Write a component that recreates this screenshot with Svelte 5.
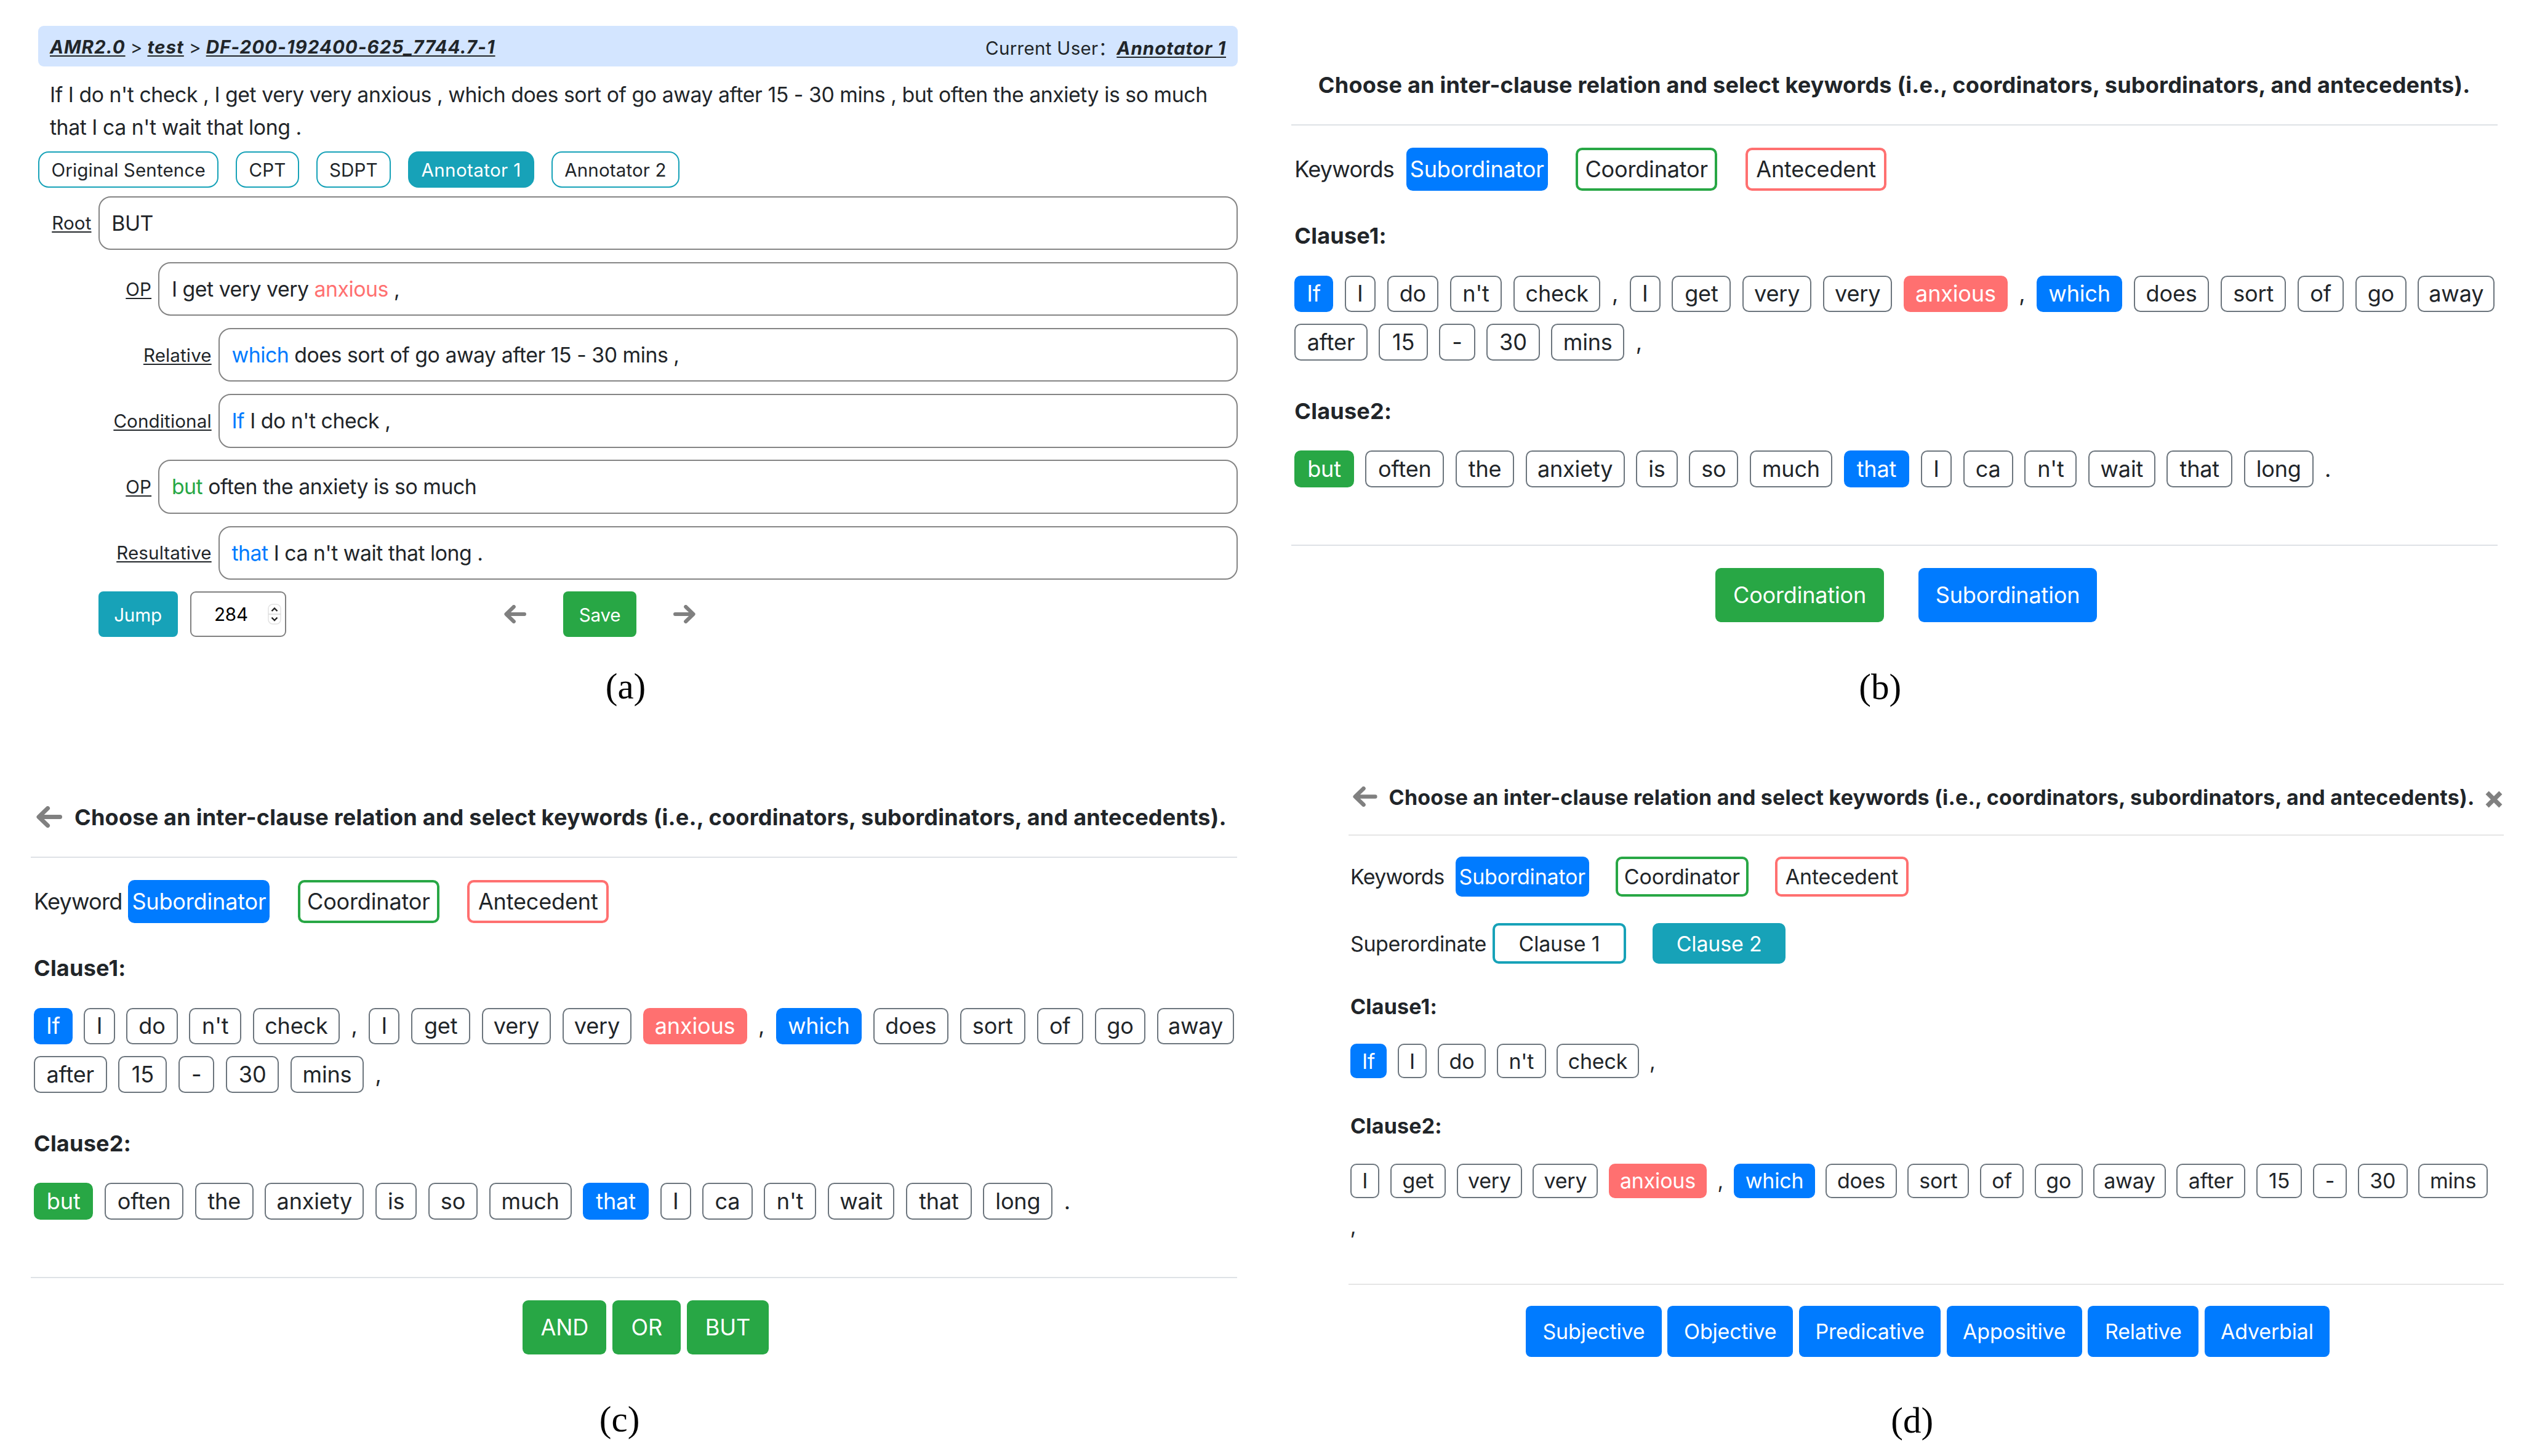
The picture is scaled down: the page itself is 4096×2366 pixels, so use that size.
<script lang="ts">
	type Kind = 'sub' | 'coord' | 'ante' | 'clause' | 'plain' | '';
	type Token = [text: string, kind?: Kind];
	type Option = { text: string; w: number; kind: Kind };
	type Dialog = {
		id: string;
		back?: boolean;
		close?: boolean;
		label: string;
		labelWidth: number;
		superordinate?: boolean;
		clauses: Token[][];
		options: Option[];
	};

	const question =
		'Choose an inter-clause relation and select keywords (i.e., coordinators, subordinators, and antecedents).';

	// token box widths, in panel units
	const widths: Record<string, number> = {
		If: 27.5, I: 22, do: 36.5, "n't": 37.1, check: 61.9, get: 42, very: 49.2,
		anxious: 73.9, which: 61, does: 53.6, sort: 46.5, of: 33, go: 36.3, away: 54.6,
		after: 51.9, '15': 34.7, '-': 25.5, '30': 37.8, mins: 52.1,
		but: 42.2, often: 56.1, the: 41.6, anxiety: 70.4, is: 29.5, so: 35.1, much: 58.6,
		that: 46.7, ca: 35.5, wait: 47.7, long: 49.4, ',': 4.3, '.': 4.3
	};

	const condition: Token[] = [['If', 'sub'], ['I'], ['do'], ["n't"], ['check'], [',', 'plain']];
	const matrix: Token[] = [
		['I'], ['get'], ['very'], ['very'], ['anxious', 'ante'], [',', 'plain'], ['which', 'sub'],
		['does'], ['sort'], ['of'], ['go'], ['away'], ['after'], ['15'], ['-'], ['30'], ['mins'], [',', 'plain']
	];
	const contrast: Token[] = [
		['but', 'coord'], ['often'], ['the'], ['anxiety'], ['is'], ['so'], ['much'], ['that', 'sub'],
		['I'], ['ca'], ["n't"], ['wait'], ['that'], ['long'], ['.', 'plain']
	];

	const dialogs: Dialog[] = [
		{
			id: 'b',
			label: 'Keywords',
			labelWidth: 79.5,
			clauses: [[...condition, ...matrix], contrast],
			options: [
				{ text: 'Coordination', w: 119.8, kind: 'coord' },
				{ text: 'Subordination', w: 127.1, kind: 'sub' }
			]
		},
		{
			id: 'c',
			back: true,
			label: 'Keyword',
			labelWidth: 67.2,
			clauses: [[...condition, ...matrix], contrast],
			options: [
				{ text: 'AND', w: 59.5, kind: 'coord' },
				{ text: 'OR', w: 48.5, kind: 'coord' },
				{ text: 'BUT', w: 58, kind: 'coord' }
			]
		},
		{
			id: 'd',
			back: true,
			close: true,
			label: 'Keywords',
			labelWidth: 79.4,
			superordinate: true,
			clauses: [condition, matrix],
			options: [
				{ text: 'Subjective', w: 102.3, kind: 'sub' },
				{ text: 'Objective', w: 94.9, kind: 'sub' },
				{ text: 'Predicative', w: 107, kind: 'sub' },
				{ text: 'Appositive', w: 102.3, kind: 'sub' },
				{ text: 'Relative', w: 83.5, kind: 'sub' },
				{ text: 'Adverbial', w: 94.5, kind: 'sub' }
			]
		}
	];

	const tabs = ['Original Sentence', 'CPT', 'SDPT', 'Annotator 1', 'Annotator 2'];
	let activeTab = $state('Annotator 1');
	let index = $state(284);

	// kw is the highlighted keyword between pre and post
	const tree: { label: string; level: number; pre?: string; kw?: string; kind?: Kind; post?: string }[] = [
		{ label: 'Root', level: 0, pre: 'BUT' },
		{ label: 'OP', level: 1, pre: 'I get very very ', kw: 'anxious', kind: 'ante', post: ' ,' },
		{ label: 'Relative', level: 2, kw: 'which', kind: 'sub', post: ' does sort of go away after 15 - 30 mins ,' },
		{ label: 'Conditional', level: 2, kw: 'If', kind: 'sub', post: " I do n't check ," },
		{ label: 'OP', level: 1, kw: 'but', kind: 'coord', post: ' often the anxiety is so much' },
		{ label: 'Resultative', level: 2, kw: 'that', kind: 'sub', post: " I ca n't wait that long ." }
	];

	const size = (n: number) => `calc(var(--u) * ${n})`;
</script>

{#snippet arrow(dir: 'left' | 'right')}
	<svg class="arrow {dir}" viewBox="0 0 42 35" aria-hidden="true">
		<path d="M18.5 3.5 4 17.5 18.5 31.5M4.5 17.5H38.5" />
	</svg>
{/snippet}

<main>
	<figure class="panel a">
		<header class="crumbs">
			<span class="path"><b>AMR2.0</b> &gt; <b>test</b> &gt; <b>DF-200-192400-625_7744.7-1</b></span>
			<span class="user">Current User：<b>Annotator 1</b></span>
		</header>
		<p class="sentence">
			If I do n't check , I get very very anxious , which does sort of go away after 15 - 30 mins , but often the anxiety is so much<br />
			that I ca n't wait that long .
		</p>
		<nav class="tabs">
			{#each tabs as tab}
				<button class="tab" class:active={tab === activeTab} onclick={() => (activeTab = tab)}>{tab}</button>
			{/each}
		</nav>
		<div class="tree">
			{#each tree as node}
				<div class="node">
					<span class="rel" style:width="{86.5 + node.level * 97.6}px"><u>{node.label}</u></span>
					<div class="box">{node.pre ?? ''}<span class="kw {node.kind ?? ''}">{node.kw ?? ''}</span>{node.post ?? ''}</div>
				</div>
			{/each}
		</div>
		<div class="toolbar">
			<button class="jump">Jump</button>
			<div class="number">
				<span>{index}</span>
				<svg viewBox="0 0 22 34" aria-hidden="true">
					<rect x="1" y="1" width="20" height="32" rx="7" />
					<path class="split" d="M1 17H21" />
					<path d="M6.5 12 11 7.5 15.5 12M6.5 22.5 11 27 15.5 22.5" />
				</svg>
			</div>
			{@render arrow('left')}
			<button class="save">Save</button>
			{@render arrow('right')}
		</div>
		<figcaption>(a)</figcaption>
	</figure>

	{#each dialogs as d}
		<figure class="panel dialog {d.id}">
			<header class="head">
				{#if d.back}{@render arrow('left')}{/if}
				<h1>{question}</h1>
				{#if d.close}
					<svg class="close" viewBox="0 0 27 27" aria-hidden="true"><path d="M3 3 24 24M24 3 3 24" /></svg>
				{/if}
			</header>
			<div class="body">
				<div class="row">
					<span class="label" style:width={size(d.labelWidth)}>{d.label}</span>
					<button class="key sub">Subordinator</button>
					<button class="key outline coord">Coordinator</button>
					<button class="key outline ante">Antecedent</button>
				</div>
				{#if d.superordinate}
					<div class="row second">
						<span class="label" style:width={size(107.4)}>Superordinate</span>
						<button class="key outline clause">Clause 1</button>
						<button class="key clause">Clause 2</button>
					</div>
				{/if}
				{#each d.clauses as tokens, i}
					<h2>Clause{i + 1}:</h2>
					<div class="tokens">
						{#each tokens as [text, kind]}
							<span class="token {kind ?? ''}" style:width={size(widths[text])}>{text}</span>
						{/each}
					</div>
				{/each}
			</div>
			<footer>
				{#each d.options as o}
					<button class="option {o.kind}" style:width={size(o.w)}>{o.text}</button>
				{/each}
			</footer>
			<figcaption>({d.id})</figcaption>
		</figure>
	{/each}
</main>

<style>
	:global(body) {
		background: #fff;
	}
	main {
		display: grid;
		grid-template-columns: 2048px 2048px;
		grid-template-rows: 1190px 1176px;
		width: 4096px;
		height: 2366px;
		overflow: hidden;
		background: #fff;
		color: #212529;
		font-family: Inter, 'Noto Sans CJK SC', sans-serif;
		letter-spacing: -0.012em;
	}
	.panel {
		box-sizing: border-box;
		margin: 0;
	}
	button {
		box-sizing: border-box;
		margin: 0;
		padding: 0;
		border: 0;
		font: inherit;
		letter-spacing: inherit;
		color: #fff;
		white-space: nowrap;
	}
	figcaption {
		font-family: 'Palatino Linotype', Palatino, 'Liberation Serif', serif;
		font-size: 59px;
		line-height: 60px;
		letter-spacing: 0;
		text-align: center;
		color: #000;
	}

	/* keyword colours */
	.sub {
		--c: #007bff;
	}
	.coord {
		--c: #28a745;
	}
	.ante {
		--c: #ff7070;
	}
	.clause {
		--c: #17a2b8;
	}

	.arrow {
		flex: none;
		fill: none;
		stroke: #808080;
		stroke-width: 7;
		stroke-linecap: round;
		stroke-linejoin: round;
	}
	.arrow.right {
		transform: scaleX(-1);
	}

	/* annotation view */
	.a {
		padding: 42px 37px 0 62px;
		font-size: 29.6px;
	}
	.crumbs {
		display: flex;
		justify-content: space-between;
		align-items: center;
		height: 66px;
		box-sizing: border-box;
		padding: 2px 19px 0;
		border-radius: 9px;
		background: #d3e5ff;
	}
	.crumbs b {
		font-style: italic;
		font-weight: 700;
		letter-spacing: 0.033em;
		text-decoration: underline;
		text-decoration-thickness: 2px;
		text-underline-offset: 3px;
	}
	.path {
		letter-spacing: -0.004em;
	}
	.user {
		letter-spacing: 0.009em;
	}
	.sentence {
		margin: 20px 0 0;
		padding-left: 19px;
		font-size: 33.8px;
		line-height: 52.6px;
		letter-spacing: -0.0133em;
		white-space: nowrap;
	}
	.tabs {
		display: flex;
		gap: 27.6px;
		margin-top: 13px;
	}
	.tab {
		height: 59px;
		padding: 0 19.5px;
		border: 2px solid #17a2b8;
		border-radius: 17px;
		background: #fff;
		color: #212529;
		letter-spacing: 0.004em;
	}
	.tab.active {
		background: #17a2b8;
		color: #fff;
		letter-spacing: 0.012em;
	}
	.tree {
		display: flex;
		flex-direction: column;
		gap: 19.9px;
		margin-top: 13.5px;
	}
	.node {
		display: flex;
		align-items: center;
		gap: 11.3px;
	}
	.rel {
		flex: none;
		text-align: right;
		letter-spacing: 0.004em;
	}
	.rel u {
		text-decoration-thickness: 2px;
		text-underline-offset: 3px;
	}
	.box {
		flex: 1;
		box-sizing: border-box;
		height: 87.3px;
		padding-left: 19.5px;
		border: 2px solid #848484;
		border-radius: 20px;
		font-size: 33.8px;
		line-height: 84px;
		letter-spacing: -0.014em;
		white-space: pre;
	}
	.kw {
		color: var(--c);
	}
	.toolbar {
		display: flex;
		align-items: center;
		height: 74px;
		margin-top: 19.5px;
		padding-left: 97.5px;
	}
	.toolbar .arrow {
		width: 36px;
		height: 30px;
	}
	.jump,
	.save {
		height: 74px;
		border-radius: 8px;
		padding-top: 2px;
	}
	.jump {
		width: 129px;
		background: #17a2b8;
	}
	.number {
		display: flex;
		align-items: center;
		justify-content: space-between;
		box-sizing: border-box;
		width: 156px;
		height: 74px;
		margin: 0 354px 0 20.5px;
		padding: 0 6px 0 37px;
		border: 2px solid #808080;
		border-radius: 9px;
		color: #000;
	}
	.number svg {
		width: 22px;
		height: 34px;
		fill: #fff;
		stroke: #222;
		stroke-width: 2.4;
	}
	.number rect {
		stroke: #e2e2e2;
		stroke-width: 1.5;
	}
	.number .split {
		stroke: #d8d8d8;
		stroke-width: 1.5;
	}
	.save {
		width: 119px;
		margin: 0 60px;
		background: #28a745;
	}
	.a figcaption {
		margin-top: 50px;
		padding-right: 40px;
	}

	/* relation dialogs, sized in --u */
	.dialog {
		--u: 2.284px;
		--line: #dee2e6;
		--inset: 5.4px;
		--foot: 40.8;
		--shift: 39px;
		font-size: calc(var(--u) * 15.8);
	}
	.b {
		padding: 74px 38.5px 0 49.9px;
	}
	.c {
		padding: 74px 38.5px 0 49.6px;
	}
	.d {
		--u: 2.153px;
		--line: #e5e5e5;
		--inset: 2.6px;
		--foot: 30.5;
		--shift: 5px;
		padding: 45px 28px 0 143.4px;
	}
	.head {
		display: flex;
		align-items: center;
		height: calc(var(--u) * 56);
		border-bottom: 2px solid var(--line);
	}
	.b .head {
		justify-content: center;
	}
	.head .arrow {
		width: calc(var(--u) * 18.4);
		margin: 0 calc(var(--u) * 8.6) calc(var(--u) * 0.6) calc(var(--u) * 4.3);
	}
	.d .head .arrow {
		margin-left: calc(var(--u) * 3.3);
	}
	.close {
		flex: none;
		width: 28px;
		margin: 7px 0 0 17px;
		fill: none;
		stroke: #808080;
		stroke-width: 7;
	}
	h1,
	h2 {
		margin: 0;
		font-size: inherit;
		font-weight: 700;
		white-space: nowrap;
		letter-spacing: 0.0056em;
	}
	.body {
		padding: calc(var(--u) * 15.9) 0 0 var(--inset);
	}
	.row {
		display: flex;
		align-items: center;
	}
	.row.second {
		margin-top: calc(var(--u) * 20.1);
	}
	.label {
		flex: none;
		letter-spacing: -0.022em;
	}
	.second .label {
		letter-spacing: -0.012em;
	}
	.key {
		width: calc(var(--u) * 100.6);
		height: calc(var(--u) * 30.4);
		margin-right: calc(var(--u) * 20);
		border: calc(var(--u) * 2) solid var(--c);
		border-radius: calc(var(--u) * 4.6);
		background: var(--c);
	}
	.key.outline {
		background: #fff;
		color: #212529;
	}
	h2 {
		margin-top: calc(var(--u) * 20.3);
		line-height: calc(var(--u) * 24);
	}
	.tokens + h2 {
		margin-top: calc(var(--u) * 24.1);
	}
	.tokens {
		display: flex;
		flex-wrap: wrap;
		gap: calc(var(--u) * 8.1) calc(var(--u) * 8.17);
		margin-top: calc(var(--u) * 16.1);
	}
	.d .tokens {
		padding-right: 22px;
	}
	.token {
		display: flex;
		align-items: center;
		justify-content: center;
		box-sizing: border-box;
		height: calc(var(--u) * 26.2);
		border: 2px solid #6c757d;
		border-radius: calc(var(--u) * 4.6);
	}
	.token.sub,
	.token.coord,
	.token.ante {
		border-color: var(--c);
		background: var(--c);
		color: #fff;
	}
	.token.plain {
		border-color: transparent;
	}
	/* rule spans the full width, options are nudged right */
	footer {
		display: flex;
		justify-content: center;
		gap: calc(var(--u) * 4.4);
		margin-top: calc(var(--u) * var(--foot));
		padding: calc(var(--u) * 15.8) 0 0 var(--shift);
		border-top: 2px solid var(--line);
	}
	.b footer {
		gap: calc(var(--u) * 24.5);
	}
	.option {
		height: calc(var(--u) * 38.2);
		border-radius: calc(var(--u) * 4);
		background: var(--c);
	}
	.dialog figcaption {
		margin-top: 75.5px;
		padding-right: 46px;
	}
	.d figcaption {
		margin-top: 73px;
	}
</style>
